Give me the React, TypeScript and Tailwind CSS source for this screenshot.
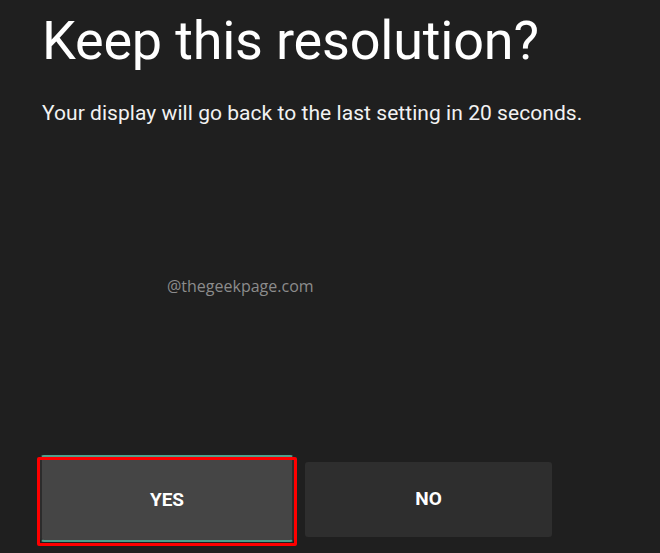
export default function App() {
  return (
    <div className="w-[660px] h-[553px] bg-[#1f1f1f] relative overflow-hidden" style={{ fontFamily: "Roboto, 'Liberation Sans', sans-serif" }}>
      <div className="pl-[42px] pt-[9px]">
        <h1 className="text-[54px] leading-[64px] text-white font-normal tracking-[-0.2px]">Keep this resolution?</h1>
        <p className="mt-[28px] text-[21px] leading-[24px] text-[#f2f2f2] tracking-[0.05px]">Your display will go back to the last setting in 20 seconds.</p>
      </div>
      <div className="absolute left-[167px] top-[275px] text-[16px] leading-[22px] text-[#8c8c8c]" style={{ fontFamily: "'Open Sans', sans-serif" }}>@thegeekpage.com</div>
      <div className="absolute left-0 top-[455px] flex items-start">
        <div className="ml-[40px] relative w-[254px] h-[87px] rounded-[4px] border-y-2 border-x-2 border-y-[#4fa08c] border-x-[#2c2c2c] bg-[#454545] flex items-center justify-center">
          <span className="text-white font-bold text-[19px] mt-[3px]">YES</span>
          <div className="absolute -left-[5px] top-0 w-[260px] h-[89px] border-[3px] border-[#ff0000] rounded-[2px]" />
        </div>
        <div className="ml-[11px] mt-[7px] w-[247px] h-[75px] rounded-[3px] bg-[#2e2e2e] flex items-center justify-center">
          <span className="text-white font-bold text-[19px]">NO</span>
        </div>
      </div>
    </div>
  );
}
